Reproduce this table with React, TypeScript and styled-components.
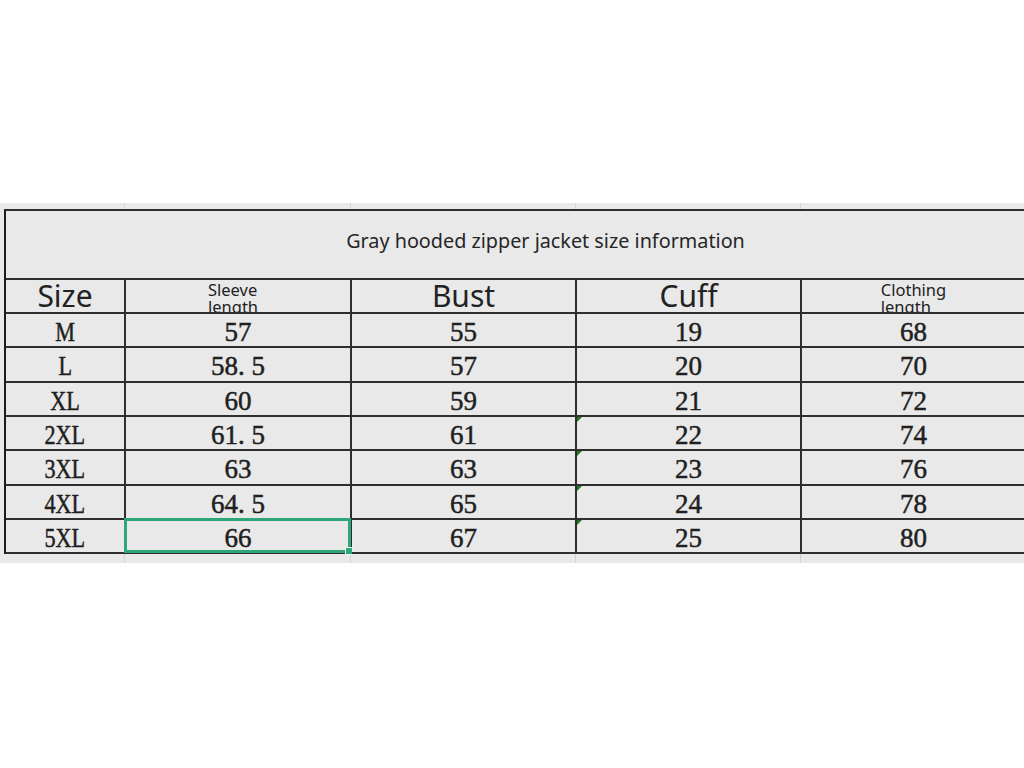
import React from 'react';
import styled, { createGlobalStyle } from 'styled-components';

const GlobalStyle = createGlobalStyle`
  html, body {
    margin: 0;
    padding: 0;
    background: #ffffff;
    overflow: hidden;
  }
`;

const COLS = '120px 226px 225px 225px 225px';
const LINE = '#2e2e2e';

const Sheet = styled.div`
  margin-top: 203px;
  height: 360px;
  padding-left: 4px;
  background: #e9e9e9;
  overflow: hidden;
`;

const Gutter = styled.div<{ $h: number }>`
  display: grid;
  grid-template-columns: ${COLS};
  height: ${(p) => p.$h}px;
  padding-left: 2px;
  width: max-content;
`;

const GutterCell = styled.div`
  border-right: 1px solid #d2d2d2;
  margin-right: 1px;
`;

const Table = styled.div`
  display: grid;
  grid-template-columns: ${COLS};
  grid-template-rows: 69px 34px 34px 35px 34px 34px 35px 34px 34px;
  border-top: 2px solid ${LINE};
  border-left: 2px solid #1c1c1c;
  width: max-content;
`;

const Cell = styled.div`
  position: relative;
  box-sizing: border-box;
  border-right: 2px solid ${LINE};
  border-bottom: 2px solid ${LINE};
  display: flex;
  align-items: center;
  justify-content: center;
  color: #1f1f1f;
`;

const TitleCell = styled(Cell)`
  grid-column: 1 / -1;
  border-right: none;
  padding-left: 58px;
  padding-bottom: 8px;
  font-family: 'Noto Sans', 'Open Sans', sans-serif;
  font-size: 19.8px;
  color: #262626;
`;

const HeadCell = styled(Cell)`
  font-family: 'Noto Sans', 'Open Sans', sans-serif;
  font-size: 30px;
  line-height: 30px;
  padding-bottom: 1px;
  color: #222;
`;

const SmallHeadCell = styled(Cell)<{ $shift: number }>`
  font-family: 'Noto Sans', 'Open Sans', sans-serif;
  font-size: 16.5px;
  line-height: 17px;
  align-items: flex-start;
  padding-top: 1px;
  padding-right: ${(p) => p.$shift}px;
  overflow: hidden;
  color: #222;
`;

const SmallHead = styled.div`
  display: flex;
  flex-direction: column;
  align-items: flex-start;
`;

const DataCell = styled(Cell)`
  font-family: 'Liberation Serif', 'DejaVu Serif', serif;
  font-size: 27px;
  padding-top: 4px;
  -webkit-text-stroke: 0.5px #1f1f1f;
`;

const SizeLabel = styled.span`
  display: inline-block;
  transform: scaleX(0.82);
`;

const Dot = styled.span`
  padding-right: 0.25em;
`;

const Selection = styled.div`
  position: absolute;
  left: -2px;
  top: -2px;
  right: -1px;
  bottom: -1px;
  border: 3px solid #2fa678;
  pointer-events: none;
`;

const Handle = styled.div`
  position: absolute;
  right: -5px;
  bottom: -5px;
  width: 6px;
  height: 6px;
  background: #2fa678;
  border: 1px solid #e9f5ef;
`;

const Flag = styled.div`
  position: absolute;
  left: 0;
  top: 0;
  width: 0;
  height: 0;
  border-top: 5px solid #1d7a22;
  border-right: 5px solid transparent;
`;

const headers = ['Size', 'Sleeve length', 'Bust', 'Cuff', 'Clothing length'];

const rows: [string, string, string, string, string][] = [
  ['M', '57', '55', '19', '68'],
  ['L', '58.5', '57', '20', '70'],
  ['XL', '60', '59', '21', '72'],
  ['2XL', '61.5', '61', '22', '74'],
  ['3XL', '63', '63', '23', '76'],
  ['4XL', '64.5', '65', '24', '78'],
  ['5XL', '66', '67', '25', '80'],
];

const renderValue = (v: string) => {
  const parts = v.split('.');
  if (parts.length === 1) return v;
  return (
    <>
      {parts[0]}
      <Dot>.</Dot>
      {parts[1]}
    </>
  );
};

const App = () => {
  return (
    <>
      <GlobalStyle />
      <Sheet>
        <Gutter $h={6}>
          {headers.map((h) => (
            <GutterCell key={h} />
          ))}
        </Gutter>
        <Table>
          <TitleCell>Gray hooded zipper jacket size information</TitleCell>
          {headers.map((h, i) => {
            const words = h.split(' ');
            return words.length > 1 ? (
              <SmallHeadCell key={h} $shift={i === 1 ? 10 : 0}>
                <SmallHead>
                  {words.map((w) => (
                    <span key={w}>{w}</span>
                  ))}
                </SmallHead>
              </SmallHeadCell>
            ) : (
              <HeadCell key={h}>{h}</HeadCell>
            );
          })}
          {rows.map((r, ri) =>
            r.map((v, ci) => (
              <DataCell key={ri + '-' + ci}>
                {ci === 0 ? <SizeLabel>{v}</SizeLabel> : renderValue(v)}
                {ci === 3 && ri >= 3 && <Flag />}
                {ci === 1 && ri === rows.length - 1 && (
                  <Selection>
                    <Handle />
                  </Selection>
                )}
              </DataCell>
            ))
          )}
        </Table>
        <Gutter $h={9}>
          {headers.map((h) => (
            <GutterCell key={h} />
          ))}
        </Gutter>
      </Sheet>
    </>
  );
};

export default App;
